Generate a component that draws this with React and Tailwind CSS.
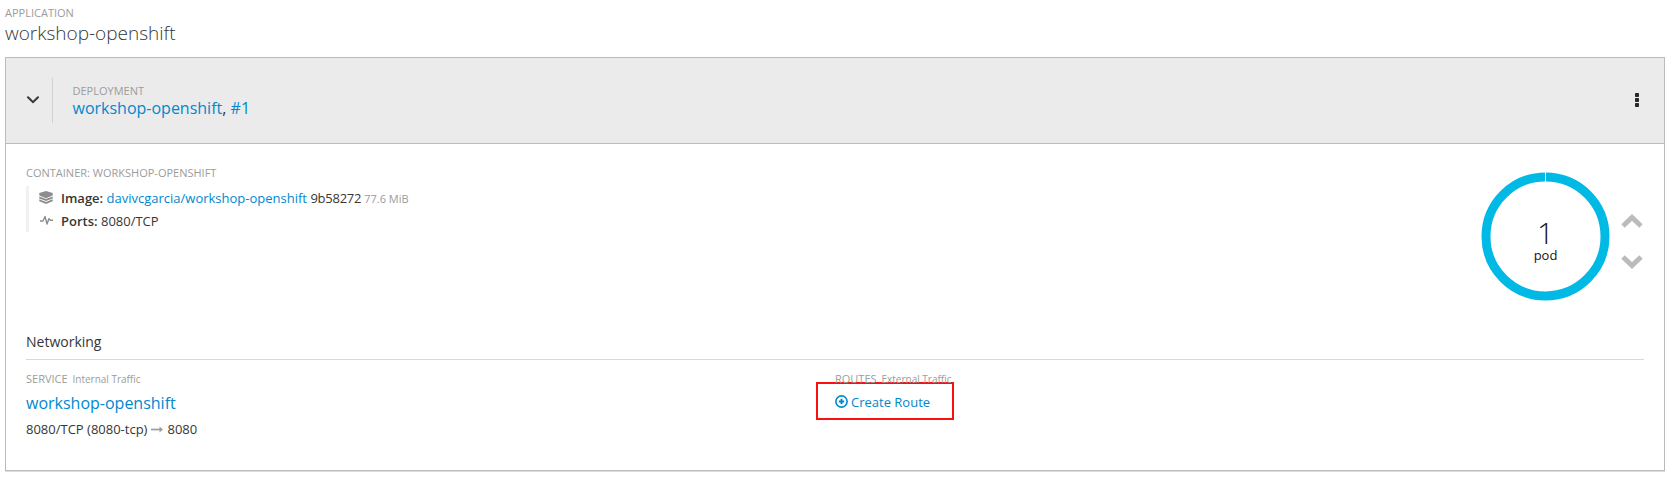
import React from "react";

const label = "text-[11px] leading-4 text-[#9c9c9c]";
const link = "text-[#0088ce]";

function LayersIcon() {
  return (
    <svg className="h-[13px] w-[14px]" viewBox="0 0 14 13" fill="#8b8d8f">
      <path d="M7 0 13.7 2V4.6L7 7.2 0.3 4.6V2Z" />
      <path d="M0.3 5.5 7 8.1 13.7 5.5V7.4L7 10.1 0.3 7.4Z" />
      <path d="M0.3 8.3 7 11 13.7 8.3V10.2L7 13 0.3 10.2Z" />
    </svg>
  );
}

function PulseIcon() {
  return (
    <svg className="h-[11px] w-[13px]" viewBox="0 0 13 11" fill="none" stroke="#8b8d8f" strokeWidth="1.4" strokeLinejoin="round">
      <path d="M0 6H3L5 1.5 7 9 9 3.6 10.2 5.2H13" />
    </svg>
  );
}

function PodDonut() {
  return (
    <div className="grid h-[128px] w-[129px] grid-cols-1 grid-rows-1">
      <svg className="col-start-1 row-start-1 h-[128px] w-[129px] overflow-visible" viewBox="0 0 129 128">
        <circle cx="64.5" cy="64.4" r="59.5" fill="none" stroke="#00b9e4" strokeWidth="9" />
        <path d="M64.5 0V10" stroke="#fff" strokeWidth="1" />
      </svg>
      <div className="col-start-1 row-start-1 flex flex-col items-center pt-[45px] text-[#151515]">
        <div className="text-[30px] leading-[32px] font-light">1</div>
        <div className="-mt-[2px] text-[13px] leading-4">pod</div>
      </div>
    </div>
  );
}

function ScaleArrow({ down = false }) {
  return (
    <svg className="h-[14px] w-[22px]" viewBox="0 0 22 14" fill="none" stroke="#bbbbbb" strokeWidth="5">
      <path d={down ? "M2 2 11 10.5 20 2" : "M2 12 11 3.5 20 12"} />
    </svg>
  );
}

export default function App() {
  return (
    <div className="h-[477px] w-[1669px] bg-white pt-[5px] pl-[5px] font-['Open_Sans',sans-serif] text-[#363636]">
      <header className="h-[52px]">
        <div className={label}>APPLICATION</div>
        <h1 className="text-[19px] leading-6 font-light">workshop-openshift</h1>
      </header>

      <section className="flex h-[414px] w-[1660px] flex-col border border-[#bbbbbb] shadow-[0_1px_0_#dddddd]">
        <div className="flex h-[86px] items-start border-b border-[#bbbbbb] bg-[#ebebeb]">
          <div className="mt-5 flex h-[45px] w-[47px] items-center border-r border-[#d1d1d1] pb-[2px] pl-[21px]">
            <svg className="h-[8px] w-[12px]" viewBox="0 0 12 8" fill="none" stroke="#363636" strokeWidth="2" strokeLinecap="round">
              <path d="M1 1.2 6 6.2 11 1.2" />
            </svg>
          </div>
          <div className="mt-[25px] ml-[19.5px]">
            <div className={label}>DEPLOYMENT</div>
            <div className="text-[16px] leading-[18px]">
              <span className={link}>workshop-openshift</span>, <span className={link}>#1</span>
            </div>
          </div>
          <svg className="mt-[35px] mr-[25px] ml-auto h-[14px] w-[4px]" viewBox="0 0 4 14" fill="#292929">
            <rect width="4" height="4" rx="0.7" />
            <rect y="5" width="4" height="4" rx="0.7" />
            <rect y="10" width="4" height="4" rx="0.7" />
          </svg>
        </div>

        <div className="flex h-[184px] items-start pl-5">
          <div className="pt-[21px]">
            <div className={label}>CONTAINER: WORKSHOP-OPENSHIFT</div>
            <div className="mt-[5px] border-l-3 border-[#f1f1f1] pl-[10px] text-[13px]">
              <div className="flex h-[23px]">
                <span className="w-[22px] pt-[5px]"><LayersIcon /></span>
                <span className="leading-[25px]">
                  <b className="font-semibold">Image:</b> <span className={link}>davivcgarcia/workshop-openshift</span>{" "}
                  <span className="tracking-[-0.25px]">9b58272</span>
                  <span className="ml-[3px] text-[11px] text-[#9c9c9c]">77.6 MiB</span>
                </span>
              </div>
              <div className="flex h-[23px]">
                <span className="w-[22px] pt-[6px] pl-px"><PulseIcon /></span>
                <span className="leading-[25px]"><b className="font-semibold">Ports:</b> 8080/TCP</span>
              </div>
            </div>
          </div>
          <div className="mt-[28px] mr-[21px] ml-auto flex">
            <PodDonut />
            <div className="mt-[42px] ml-[11px] flex flex-col gap-[26.5px]">
              <ScaleArrow />
              <ScaleArrow down />
            </div>
          </div>
        </div>

        <div className="mx-5">
          <h2 className="h-[32px] border-b border-[#d9d9d9] pt-[3px] text-[14px] leading-[22px]">Networking</h2>
          <div className="grid grid-cols-2 pt-[11px]">
            <div>
              <div className={label}>SERVICE <span className="ml-[2px] text-[10px]">Internal Traffic</span></div>
              <div className="mt-[5px] text-[16px] leading-[22px]"><span className={link}>workshop-openshift</span></div>
              <div className="mt-[6px] flex items-center text-[13px] leading-[18px]">
                8080/TCP (8080-tcp)
                <svg className="mx-1 h-[7px] w-[12px]" viewBox="0 0 12 7">
                  <path d="M0 3.5H9" stroke="#9c9c9c" strokeWidth="1.7" />
                  <path d="M8.5 0.5 12 3.5 8.5 6.5Z" fill="#9c9c9c" />
                </svg>
                8080
              </div>
            </div>
            <div>
              <div className={label}>ROUTES <span className="ml-[2px] text-[10px]">External Traffic</span></div>
              <div className="-mt-[5px] -ml-[19px] flex h-[38px] w-[137.5px] items-center border-2 border-[#fb1010] pt-[4px] pl-[17px] text-[13px] text-[#0088ce]">
                <svg className="mr-[3px] mb-[3px] h-[13px] w-[13px]" viewBox="0 0 13 13" fill="none" stroke="#0088ce">
                  <circle cx="6.5" cy="6.5" r="5.6" strokeWidth="1.6" />
                  <path d="M6.5 3.8V9.2M3.8 6.5H9.2" strokeWidth="1.9" />
                </svg>
                Create Route
              </div>
            </div>
          </div>
        </div>
      </section>
    </div>
  );
}
